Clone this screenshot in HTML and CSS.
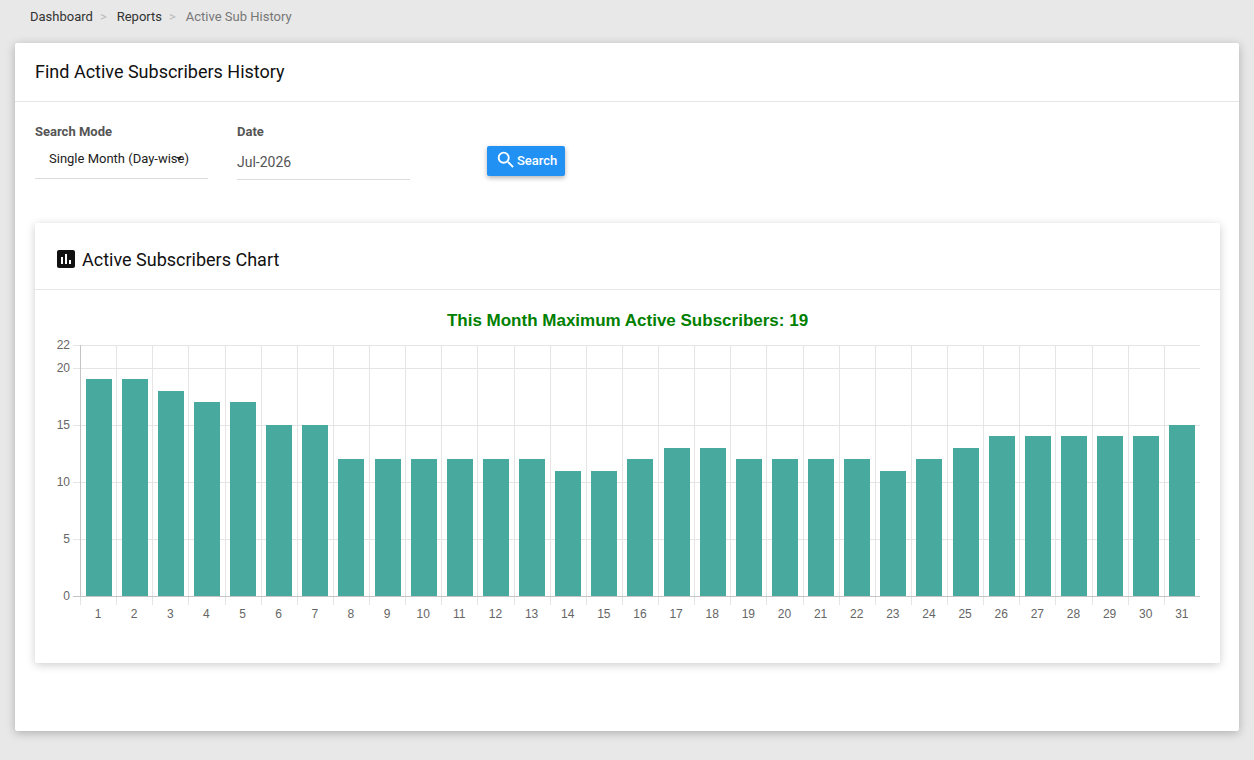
FILE: index.html
```
<!DOCTYPE html>
<html lang="en">
<head>
  <meta charset="UTF-8" />
  <meta name="viewport" content="width=device-width, initial-scale=1" />
  <title>Active Sub History</title>
  <link rel="stylesheet" href="styles.css">
</head>
<body>
  <nav aria-label="Breadcrumb">
    <ol class="breadcrumb">
      <li><a href="#">Dashboard</a></li>
      <li><a href="#">Reports</a></li>
      <li>Active Sub History</li>
    </ol>
  </nav>

  <main class="card">
    <div class="card-header">
      <h1>Find Active Subscribers History</h1>
    </div>
    <div class="card-body">
      <form class="search-form">
        <div class="field">
          <label for="mode">Search Mode</label>
          <div class="select-wrap">
            <select id="mode">
              <option>Single Month (Day-wise)</option>
            </select>
            <span class="caret"></span>
          </div>
        </div>
        <div class="field">
          <label for="date">Date</label>
          <input type="text" id="date" value="Jul-2026">
        </div>
        <button type="button" class="btn">
          <svg viewBox="0 0 24 24" width="22" height="22"><path fill="currentColor" d="M15.5 14h-.79l-.28-.27A6.471 6.471 0 0 0 16 9.5 6.5 6.5 0 1 0 9.5 16c1.61 0 3.09-.59 4.23-1.57l.27.28v.79l5 4.99L20.49 19l-4.99-5zm-6 0C7.01 14 5 11.99 5 9.5S7.01 5 9.5 5 14 7.01 14 9.5 11.99 14 9.5 14z"/></svg>
          <span>Search</span>
        </button>
      </form>

      <section class="card chart-card">
        <div class="card-header chart-header">
          <svg viewBox="0 0 24 24" width="24" height="24"><path fill="currentColor" d="M19 3H5c-1.1 0-2 .9-2 2v14c0 1.1.9 2 2 2h14c1.1 0 2-.9 2-2V5c0-1.1-.9-2-2-2zM9 17H7v-7h2v7zm4 0h-2V7h2v10zm4 0h-2v-4h2v4z"/></svg>
          <h2>Active Subscribers Chart</h2>
        </div>
        <div class="chart-body">
          <h3>This Month Maximum Active Subscribers: 19</h3>
          <div class="chart">
            <div class="bands">
              <div class="band band-top"><span>22</span></div>
              <div class="band"><span>20</span></div>
              <div class="band"><span>15</span></div>
              <div class="band"><span>10</span></div>
              <div class="band"><span>5</span></div>
              <div class="band band-zero"><span>0</span></div>
            </div>
            <div class="columns" id="columns"></div>
          </div>
        </div>
      </section>
    </div>
  </main>

  <script>
    const data = [19, 19, 18, 17, 17, 15, 15, 12, 12, 12, 12, 12, 12, 11, 11, 12,
      13, 13, 12, 12, 12, 12, 11, 12, 13, 14, 14, 14, 14, 14, 15];
    const max = 22;

    document.getElementById("columns").innerHTML = data.map((n, i) => `
      <div class="column">
        <div class="track"><div class="bar" style="height: ${n / max * 100}%"></div></div>
        <div class="tick"></div>
        <span>${i + 1}</span>
      </div>`).join("");
  </script>
</body>
</html>
```
FILE: styles.css
```
* {
  box-sizing: border-box;
}
body {
  margin: 0;
  padding: 0 15px 29px;
  background-color: #e8e8e8;
  font-family: Roboto, sans-serif;
  font-size: 13px;
  color: #555;
}
h1, h2, h3 {
  margin: 0;
  font-weight: 400;
}
.breadcrumb {
  display: flex;
  margin: 0;
  padding: 7px 15px 16px;
  list-style: none;
  line-height: 20px;
  color: #777;
}
.breadcrumb li + li::before {
  content: ">";
  padding: 0 10px 0 7px;
  color: #bbb;
}
.breadcrumb a {
  color: #333;
  text-decoration: none;
}
.card {
  background-color: #fff;
  border-radius: 2px;
  box-shadow: 0 2px 10px rgba(0, 0, 0, 0.25);
}
.card-header {
  display: flex;
  align-items: center;
  padding: 18px 20px 19px;
  border-bottom: 1px solid #e6e6e6;
  color: #111;
}
.card-header h1,
.card-header h2 {
  font-size: 18px;
  line-height: 21px;
}
.card-body {
  padding: 20px 19px 68px 20px;
}
.search-form {
  display: flex;
  align-items: flex-start;
  gap: 29px;
  min-height: 101px;
}
.field {
  width: 173px;
}
.field label {
  display: block;
  line-height: 19px;
  font-weight: 700;
}
.select-wrap {
  position: relative;
}
.field select,
.field input {
  width: 100%;
  height: 38px;
  border: 0;
  border-bottom: 1px solid #ddd;
  border-radius: 0;
  background: transparent;
  font-family: inherit;
  outline: none;
}
.field select {
  appearance: none;
  padding: 0 0 2px 14px;
  font-size: 13px;
  color: #222;
}
.field input {
  height: 39px;
  padding: 4px 0 0;
  font-size: 14px;
  color: #555;
}
.caret {
  position: absolute;
  top: 16px;
  right: 26px;
  border: 3px solid transparent;
  border-top-color: #222;
  border-bottom: 0;
  pointer-events: none;
}
.btn {
  display: flex;
  align-items: center;
  height: 30px;
  margin: 24px 0 0 48px;
  padding: 0 8px 2px;
  border: 0;
  border-radius: 2px;
  background-color: #2191f3;
  box-shadow: 0 2px 5px rgba(0, 0, 0, 0.3);
  font-family: inherit;
  font-size: 13px;
  font-weight: 500;
  color: #fff;
  cursor: pointer;
}
.chart-card {
  box-shadow: 0 2px 10px rgba(0, 0, 0, 0.2);
}
.chart-header {
  gap: 4px;
  padding: 24px 19px 18px;
}
.chart-body {
  padding: 21px 20px 34px;
}
.chart-body h3 {
  font-family: "Liberation Sans", sans-serif;
  font-size: 17px;
  font-weight: 700;
  line-height: 20px;
  text-align: center;
  color: #008000;
}
/* the bands and the columns share one grid cell */
.chart {
  display: grid;
  grid-template-rows: 252px 32px;
  margin-top: 14px;
  font-family: "Liberation Sans", sans-serif;
  font-size: 12px;
  color: #666;
}
.bands {
  grid-area: 1 / 1 / 2 / 2;
  display: flex;
  flex-direction: column;
}
.band {
  display: flex;
  flex: 5 0 0;
}
.band-top {
  flex-grow: 2;
}
.band-zero {
  flex: 0 0 1px;
}
.band span {
  width: 18px;
  height: 14px;
  margin: -7px 0;
  padding-right: 3px;
  line-height: 14px;
  text-align: right;
}
.band::after {
  content: "";
  flex: 1;
  border-top: 1px solid #e5e5e5;
}
.band-zero::after {
  border-color: #c4c4c4;
}
.columns {
  grid-area: 1 / 1 / 3 / 2;
  display: flex;
  margin-left: 25px;
}
.column {
  display: flex;
  flex: 1;
  flex-direction: column;
  text-align: center;
}
.track {
  display: flex;
  align-items: flex-end;
  justify-content: center;
  height: 251px;
  border-left: 1px solid #e5e5e5;
}
.column:first-child .track {
  border-color: #c4c4c4;
}
.bar {
  width: 74%;
  background-color: #48aa9f;
}
.tick {
  height: 8px;
  margin-top: 1px;
  border-left: 1px solid #e5e5e5;
}
.column span {
  margin-top: 2px;
  line-height: 14px;
}
```
